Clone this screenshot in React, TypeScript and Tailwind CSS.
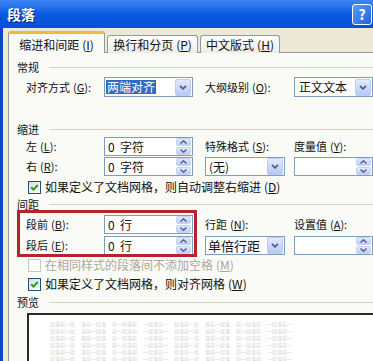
import React from 'react';

const font = "font-['Noto_Sans_CJK_SC','Noto_Sans',sans-serif]";

const Key: React.FC<{ k: string }> = ({ k }) => (
  <span className="ml-[3px]">
    (<span className="underline underline-offset-1">{k}</span>)
  </span>
);

const Label: React.FC<{ text: string; k: string; className: string }> = ({ text, k, className }) => (
  <div className={`${className} text-[11px] leading-none text-[#111] whitespace-nowrap`}>
    {text}
    <Key k={k} />:
  </div>
);

const SpinBtn: React.FC = () => (
  <div className="flex flex-col w-[15px] h-[17px] mr-px gap-px shrink-0">
    <div className="flex-1 rounded-[2px] bg-gradient-to-b from-[#e3eafc] to-[#bccdf6] border border-[#c3d3f7] flex items-center justify-center">
      <svg width="7" height="4" viewBox="0 0 7 4">
        <path d="M0.5 3.5 L3.5 0.8 L6.5 3.5" fill="none" stroke="#4d6185" strokeWidth="1.4" />
      </svg>
    </div>
    <div className="flex-1 rounded-[2px] bg-gradient-to-b from-[#e3eafc] to-[#bccdf6] border border-[#c3d3f7] flex items-center justify-center">
      <svg width="7" height="4" viewBox="0 0 7 4">
        <path d="M0.5 0.5 L3.5 3.2 L6.5 0.5" fill="none" stroke="#4d6185" strokeWidth="1.4" />
      </svg>
    </div>
  </div>
);

const DropBtn: React.FC = () => (
  <div className="w-[16px] h-[17px] mr-px shrink-0 rounded-[2px] bg-gradient-to-b from-[#e3eafc] to-[#b6c8f4] border border-[#bcccf2] flex items-center justify-center">
    <svg width="8" height="5" viewBox="0 0 8 5">
      <path d="M1 0.8 L4 3.8 L7 0.8" fill="none" stroke="#4d6185" strokeWidth="1.8" />
    </svg>
  </div>
);

const Field: React.FC<{ className: string; kind: 'spin' | 'drop'; children?: React.ReactNode }> = ({
  className,
  kind,
  children,
}) => (
  <div className={`${className} border border-[#7f9db9] bg-white flex items-center`}>
    <div className="flex-1 min-w-0 flex items-center whitespace-nowrap text-[#111]">{children}</div>
    {kind === 'spin' ? <SpinBtn /> : <DropBtn />}
  </div>
);

const Check: React.FC<{ checked?: boolean; disabled?: boolean }> = ({ checked, disabled }) => (
  <span
    className={`w-[13px] h-[13px] shrink-0 flex items-center justify-center border ${
      disabled ? 'border-[#cac8bb] bg-white' : 'border-[#1c5180] bg-gradient-to-br from-[#dcdcd7] to-white'
    }`}
  >
    {checked && (
      <svg width="9" height="9" viewBox="0 0 9 9">
        <path d="M1.2 4.2 L3.5 6.6 L7.8 2" fill="none" stroke="#21a121" strokeWidth="2" />
      </svg>
    )}
  </span>
);

const Group: React.FC<{ title: string; className: string }> = ({ title, className }) => (
  <div className={`${className} flex items-center h-[14px] pl-[8px]`}>
    <span className="text-[11px] leading-none text-[#111]">{title}</span>
    <div className="ml-[10px] flex-1 h-px bg-[#d5d2c2]" />
  </div>
);

// faint sample text of the preview pane, in groups
const groups = ['段落前一段', '落前一段落', '前一段落前', '一段落前一', '段落前一段', '落前一段落', '前一段落前', '一段落前一'];

const App: React.FC = () => {
  return (
    <div className={`${font} relative w-[373px] h-[361px] overflow-hidden flex flex-col bg-[#0d47c8]`}>
      {/* title bar */}
      <div className="h-[28px] shrink-0 flex items-center justify-between pl-[7px] pr-[1px] bg-gradient-to-b from-[#3d85f5] via-[#0a5ae2] to-[#0650d8]">
        <span className="text-white font-bold text-[14px] leading-none [text-shadow:1px_1px_#0a1e7a]">段落</span>
        <div className="w-[20px] h-[21px] rounded-[3px] border border-white bg-gradient-to-br from-[#5d9af6] to-[#2361dc] flex items-center justify-center text-white font-bold text-[14px] leading-none">
          ?
        </div>
      </div>

      {/* body */}
      <div className="flex-1 ml-[3px] bg-[#ece9d8] pl-[5px] pt-[3px] flex flex-col">
        {/* tabs */}
        <div className="flex items-end h-[22px] -mb-px relative z-10">
          <div className="w-[97px] h-[22px] bg-[#fafaf7] border-x border-[#919b9c] rounded-t-[3px] border-t-[3px] border-t-[#f5b73a] flex items-center justify-center pt-[2px] text-[12px] text-[#111]">
            缩进和间距<Key k="I" />
          </div>
          <div className="ml-[2px] w-[91px] h-[18px] bg-gradient-to-b from-white to-[#ecebe5] border border-b-0 border-[#919b9c] rounded-t-[3px] flex items-center justify-center text-[12px] text-[#111]">
            换行和分页<Key k="P" />
          </div>
          <div className="ml-[2px] w-[80px] h-[18px] bg-gradient-to-b from-white to-[#ecebe5] border border-b-0 border-[#919b9c] rounded-t-[3px] flex items-center justify-center text-[12px] text-[#111]">
            中文版式<Key k="H" />
          </div>
        </div>

        {/* panel */}
        <div className="flex-1 border-t border-l border-[#919b9c] bg-[#fafaf7] flex flex-col">
          <Group title="常规" className="mt-[7px]" />

          <div className="mt-[3px] h-[20px] flex items-center pl-[17px]">
            <Label text="对齐方式" k="G" className="w-[79px]" />
            <Field className="w-[90px] h-[20px]" kind="drop">
              <span className="ml-[1px] px-[1px] h-[14px] flex items-center bg-[#316ac5] text-white text-[12px] leading-none">
                两端对齐
              </span>
            </Field>
            <Label text="大纲级别" k="O" className="ml-[12px] w-[81px]" />
            <Field className="ml-[9px] w-[80px] h-[20px]" kind="drop">
              <span className="pl-[4px] text-[12px] leading-none">正文文本</span>
            </Field>
          </div>

          <Group title="缩进" className="mt-[25px]" />

          <div className="mt-px h-[19px] flex items-center pl-[17px]">
            <Label text="左" k="L" className="w-[79px]" />
            <Field className="w-[90px] h-[19px]" kind="spin">
              <span className="pl-[3px] text-[12px] leading-none">0&nbsp;&nbsp;字符</span>
            </Field>
            <Label text="特殊格式" k="S" className="ml-[12px] w-[81px]" />
            <Label text="度量值" k="Y" className="ml-[9px] w-[80px]" />
          </div>

          <div className="mt-px h-[19px] flex items-center pl-[17px]">
            <Label text="右" k="R" className="w-[79px]" />
            <Field className="w-[90px] h-[19px]" kind="spin">
              <span className="pl-[3px] text-[12px] leading-none">0&nbsp;&nbsp;字符</span>
            </Field>
            <Field className="ml-[12px] w-[81px] h-[19px]" kind="drop">
              <span className="pl-[3px] text-[12px] leading-none">(无)</span>
            </Field>
            <Field className="ml-[9px] w-[80px] h-[19px]" kind="spin" />
          </div>

          <div className="mt-[4px] h-[14px] flex items-center pl-[19px]">
            <Check checked />
            <span className="ml-[4px] text-[12px] leading-none text-[#111] whitespace-nowrap">
              如果定义了文档网格，则自动调整右缩进<Key k="D" />
            </span>
          </div>

          <Group title="间距" className="mt-[3px]" />

          <div className="mt-[4px] h-[19px] flex items-center pl-[17px]">
            <Label text="段前" k="B" className="w-[79px]" />
            <Field className="w-[90px] h-[19px]" kind="spin">
              <span className="pl-[3px] text-[12px] leading-none">0&nbsp;&nbsp;行</span>
            </Field>
            <Label text="行距" k="N" className="ml-[12px] w-[81px]" />
            <Label text="设置值" k="A" className="ml-[9px] w-[80px]" />
          </div>

          <div className="mt-[2px] h-[19px] flex items-center pl-[17px]">
            <Label text="段后" k="E" className="w-[79px]" />
            <Field className="w-[90px] h-[19px]" kind="spin">
              <span className="pl-[3px] text-[12px] leading-none">0&nbsp;&nbsp;行</span>
            </Field>
            <Field className="ml-[12px] w-[81px] h-[19px]" kind="drop">
              <span className="pl-[2px] text-[13px] leading-none">单倍行距</span>
            </Field>
            <Field className="ml-[9px] w-[80px] h-[19px]" kind="spin" />
          </div>

          <div className="mt-[3px] h-[14px] flex items-center pl-[19px]">
            <Check disabled />
            <span className="ml-[4px] text-[12px] leading-none text-[#aca899] whitespace-nowrap">
              在相同样式的段落间不添加空格<Key k="M" />
            </span>
          </div>

          <div className="mt-[5px] h-[14px] flex items-center pl-[19px]">
            <Check checked />
            <span className="ml-[4px] text-[12px] leading-none text-[#111] whitespace-nowrap">
              如果定义了文档网格，则对齐网格<Key k="W" />
            </span>
          </div>

          <Group title="预览" className="mt-[4px]" />

          <div className="mt-[4px] ml-[18px] flex-1 border-t-2 border-l-2 border-[#2a2a2a] bg-white pl-[21px] pt-[6px] flex flex-col gap-[1px]">
            {[0, 1, 2, 3, 4, 5].map((i) => (
              <div key={i} className="flex gap-[6px] h-[6px] items-center">
                {groups.map((g, j) => (
                  <span key={j} className="text-[5px] leading-[6px] text-[#d2d2d2] whitespace-nowrap">
                    {g}
                  </span>
                ))}
              </div>
            ))}
          </div>
        </div>
      </div>

      {/* annotation box */}
      <div className="absolute left-[17px] top-[210px] w-[180px] h-[47px] border-[3px] border-[#b8232b]" />
    </div>
  );
};

export default App;
